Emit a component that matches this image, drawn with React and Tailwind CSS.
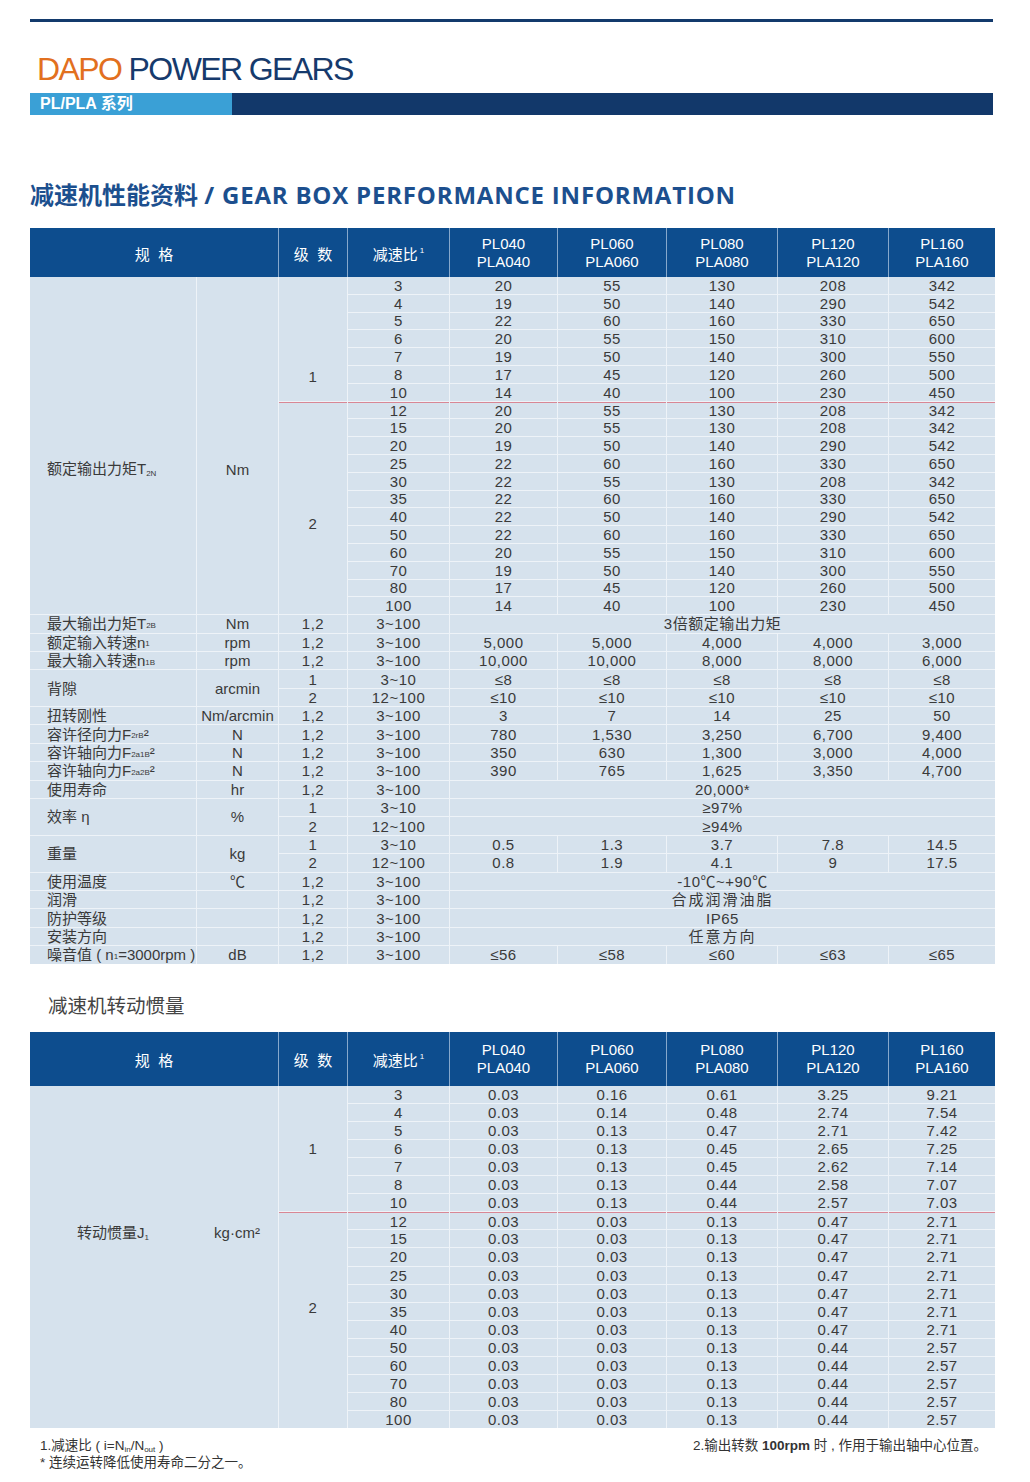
import React from "react";

const COLS = "grid-cols-[166px_81px_68px_101px_107px_108px_110px_110px_106px]";
const RED = "border-t border-[#d98795]";

const rows1 = [
  ["3", "20", "55", "130", "208", "342"],
  ["4", "19", "50", "140", "290", "542"],
  ["5", "22", "60", "160", "330", "650"],
  ["6", "20", "55", "150", "310", "600"],
  ["7", "19", "50", "140", "300", "550"],
  ["8", "17", "45", "120", "260", "500"],
  ["10", "14", "40", "100", "230", "450"],
  ["12", "20", "55", "130", "208", "342"],
  ["15", "20", "55", "130", "208", "342"],
  ["20", "19", "50", "140", "290", "542"],
  ["25", "22", "60", "160", "330", "650"],
  ["30", "22", "55", "130", "208", "342"],
  ["35", "22", "60", "160", "330", "650"],
  ["40", "22", "50", "140", "290", "542"],
  ["50", "22", "60", "160", "330", "650"],
  ["60", "20", "55", "150", "310", "600"],
  ["70", "19", "50", "140", "300", "550"],
  ["80", "17", "45", "120", "260", "500"],
  ["100", "14", "40", "100", "230", "450"],
];

const rows2 = [
  ["3", "0.03", "0.16", "0.61", "3.25", "9.21"],
  ["4", "0.03", "0.14", "0.48", "2.74", "7.54"],
  ["5", "0.03", "0.13", "0.47", "2.71", "7.42"],
  ["6", "0.03", "0.13", "0.45", "2.65", "7.25"],
  ["7", "0.03", "0.13", "0.45", "2.62", "7.14"],
  ["8", "0.03", "0.13", "0.44", "2.58", "7.07"],
  ["10", "0.03", "0.13", "0.44", "2.57", "7.03"],
  ["12", "0.03", "0.03", "0.13", "0.47", "2.71"],
  ["15", "0.03", "0.03", "0.13", "0.47", "2.71"],
  ["20", "0.03", "0.03", "0.13", "0.47", "2.71"],
  ["25", "0.03", "0.03", "0.13", "0.47", "2.71"],
  ["30", "0.03", "0.03", "0.13", "0.47", "2.71"],
  ["35", "0.03", "0.03", "0.13", "0.47", "2.71"],
  ["40", "0.03", "0.03", "0.13", "0.47", "2.71"],
  ["50", "0.03", "0.03", "0.13", "0.44", "2.57"],
  ["60", "0.03", "0.03", "0.13", "0.44", "2.57"],
  ["70", "0.03", "0.03", "0.13", "0.44", "2.57"],
  ["80", "0.03", "0.03", "0.13", "0.44", "2.57"],
  ["100", "0.03", "0.03", "0.13", "0.44", "2.57"],
];

const Sub = ({ children }) => <span className="text-[8px] leading-none relative top-[2px]">{children}</span>;

const specs = [
  { label: <>最大输出力矩T<Sub>2B</Sub></>, unit: "Nm", rows: [{ s: "1,2", r: "3~100", span: "3倍额定输出力矩" }] },
  { label: <>额定输入转速n<Sub>1</Sub></>, unit: "rpm", rows: [{ s: "1,2", r: "3~100", v: ["5,000", "5,000", "4,000", "4,000", "3,000"] }] },
  { label: <>最大输入转速n<Sub>1B</Sub></>, unit: "rpm", rows: [{ s: "1,2", r: "3~100", v: ["10,000", "10,000", "8,000", "8,000", "6,000"] }] },
  {
    label: "背隙", unit: "arcmin", rows: [
      { s: "1", r: "3~10", v: ["≤8", "≤8", "≤8", "≤8", "≤8"] },
      { s: "2", r: "12~100", v: ["≤10", "≤10", "≤10", "≤10", "≤10"] },
    ],
  },
  { label: "扭转刚性", unit: "Nm/arcmin", rows: [{ s: "1,2", r: "3~100", v: ["3", "7", "14", "25", "50"] }] },
  { label: <>容许径向力F<Sub>2rB</Sub>²</>, unit: "N", rows: [{ s: "1,2", r: "3~100", v: ["780", "1,530", "3,250", "6,700", "9,400"] }] },
  { label: <>容许轴向力F<Sub>2a1B</Sub>²</>, unit: "N", rows: [{ s: "1,2", r: "3~100", v: ["350", "630", "1,300", "3,000", "4,000"] }] },
  { label: <>容许轴向力F<Sub>2a2B</Sub>²</>, unit: "N", rows: [{ s: "1,2", r: "3~100", v: ["390", "765", "1,625", "3,350", "4,700"] }] },
  { label: "使用寿命", unit: "hr", rows: [{ s: "1,2", r: "3~100", span: "20,000*" }] },
  {
    label: "效率 η", unit: "%", rows: [
      { s: "1", r: "3~10", span: "≥97%" },
      { s: "2", r: "12~100", span: "≥94%" },
    ],
  },
  {
    label: "重量", unit: "kg", rows: [
      { s: "1", r: "3~10", v: ["0.5", "1.3", "3.7", "7.8", "14.5"] },
      { s: "2", r: "12~100", v: ["0.8", "1.9", "4.1", "9", "17.5"] },
    ],
  },
  { label: "使用温度", unit: "℃", rows: [{ s: "1,2", r: "3~100", span: "-10℃~+90℃" }] },
  { label: "润滑", unit: "", rows: [{ s: "1,2", r: "3~100", span: "合成润滑油脂", wide: true }] },
  { label: "防护等级", unit: "", rows: [{ s: "1,2", r: "3~100", span: "IP65" }] },
  { label: "安装方向", unit: "", rows: [{ s: "1,2", r: "3~100", span: "任意方向", wide: true }] },
  { label: <>噪音值 ( n<Sub>1</Sub>=3000rpm )</>, unit: "dB", rows: [{ s: "1,2", r: "3~100", v: ["≤56", "≤58", "≤60", "≤63", "≤65"] }] },
];

function C({ className = "", children }) {
  return (
    <div className={"bg-[#d6e2ed] flex items-center justify-center leading-none text-[15px] tracking-[0.5px] text-[#3a3a3a] whitespace-nowrap " + className}>
      {children}
    </div>
  );
}

function Header({ models, h }) {
  return (
    <div className={`grid ${COLS} gap-x-px bg-[#86a8cc] text-white ${h}`}>
      <div className="col-span-2 bg-[#0d4d8e] flex items-center justify-center pt-[6px] text-[15px]">规&nbsp;&nbsp;格</div>
      <div className="bg-[#0d4d8e] flex items-center justify-center pt-[6px] text-[15px]">级&nbsp;&nbsp;数</div>
      <div className="bg-[#0d4d8e] flex items-center justify-center pt-[6px] text-[15px]">
        减速比<span className="text-[8px] relative -top-[5px] ml-[2px]">1</span>
      </div>
      {models.map((m) => (
        <div key={m[0]} className="bg-[#0d4d8e] flex flex-col items-center justify-center text-[15px] leading-[18px]">
          <span>{m[0]}</span>
          <span>{m[1]}</span>
        </div>
      ))}
    </div>
  );
}

const models = [["PL040", "PLA040"], ["PL060", "PLA060"], ["PL080", "PLA080"], ["PL120", "PLA120"], ["PL160", "PLA160"]];

function ValueRow({ row, red }) {
  return row.map((v, i) => (
    <C key={i} className={red ? RED : ""}>{v}</C>
  ));
}

function SpecGroup({ g }) {
  const two = g.rows.length === 2;
  const out = [];
  g.rows.forEach((r, idx) => {
    if (idx === 0) {
      out.push(
        <C key="l" className={"justify-start pl-[17px] text-[14px] tracking-normal " + (two ? "row-span-2" : "")}>{g.label}</C>,
        <C key="u" className={"text-[14px] tracking-normal " + (two ? "row-span-2" : "")}>{g.unit}</C>
      );
    }
    out.push(<C key={"s" + idx}>{r.s}</C>, <C key={"r" + idx}>{r.r}</C>);
    if (r.span) {
      out.push(
        <C key={"sp" + idx} className={"col-span-5 text-[14px] " + (r.wide ? "tracking-[2px]" : "")}>
          {r.span}
        </C>
      );
    } else {
      r.v.forEach((v, i) => out.push(<C key={"v" + idx + i}>{v}</C>));
    }
  });
  return out;
}

export default function App() {
  return (
    <div className="w-[1030px] min-h-[1482px] bg-white pl-[30px] pt-[19px] font-['Liberation_Sans','Noto_Sans_CJK_SC',sans-serif]">
      {/* Top rule */}
      <div className="h-[3px] w-[963px] bg-[#133a6c]" />

      {/* Brand */}
      <div className="mt-[31px] pl-[7px] h-[32px] leading-[32px] text-[32px] tracking-[-1.6px]">
        <span className="text-[#e2701f]">DAPO</span> <span className="text-[#163a6c]">POWER GEARS</span>
      </div>

      <div className="mt-[8px] flex h-[22px] w-[963px]">
        <div className="w-[202px] bg-[#3aa0d6] text-white text-[16px] font-bold leading-[22px] pl-[10px]">
          PL/PLA 系列
        </div>
        <div className="flex-1 bg-[#12386a]" />
      </div>

      {/* Title */}
      <h1 className="mt-[64px] h-[32px] leading-[32px] text-[24px] font-bold text-[#1c4f8e] font-['Open_Sans','Noto_Sans_CJK_SC',sans-serif]">
        减速机性能资料 <span className="tracking-[0.8px]">/ GEAR BOX PERFORMANCE INFORMATION</span>
      </h1>

      {/* Table 1 */}
      <div className="mt-[17px] w-[965px]">
        <Header models={models} h="h-[49px]" />
        <div className={`grid ${COLS} grid-rows-[repeat(19,16.8px)_repeat(19,17.4px)] gap-px bg-[#eef3f8]`}>
          {rows1.map((row, i) => (
            <React.Fragment key={i}>
              {i === 0 && (
                <>
                  <C className="row-span-19 items-start justify-start pl-[17px] pt-[184px] text-[14px] tracking-normal">
                    <span>额定输出力矩T<Sub>2N</Sub></span>
                  </C>
                  <C className="row-span-19 items-start pt-[185px] text-[14px] tracking-normal">Nm</C>
                  <C className="row-span-7 items-start pt-[92px]">1</C>
                </>
              )}
              {i === 7 && <C className={"row-span-12 items-start pt-[113px] " + RED}>2</C>}
              <ValueRow row={row} red={i === 7} />
            </React.Fragment>
          ))}
          {specs.map((g, i) => (
            <SpecGroup key={i} g={g} />
          ))}
        </div>
      </div>

      {/* Inertia title */}
      <div className="mt-[30px] ml-[18px] h-[24px] leading-[24px] text-[19.5px] text-[#444]">减速机转动惯量</div>

      {/* Table 2 */}
      <div className="mt-[14px] w-[965px]">
        <Header models={models} h="h-[54px]" />
        <div className={`grid ${COLS} grid-rows-[repeat(19,17.1px)] gap-px bg-[#eef3f8]`}>
          {rows2.map((row, i) => (
            <React.Fragment key={i}>
              {i === 0 && (
                <>
                  <C className="col-span-2 row-span-19 items-start pt-[139px] text-[14px] tracking-normal">
                    <div className="w-[166px] text-center">转动惯量J<Sub>1</Sub></div>
                    <div className="w-[82px] text-center text-[15px]">kg·cm²</div>
                  </C>
                  <C className="row-span-7 items-start pt-[55px]">1</C>
                </>
              )}
              {i === 7 && <C className={"row-span-12 items-start pt-[87px] " + RED}>2</C>}
              <ValueRow row={row} red={i === 7} />
            </React.Fragment>
          ))}
        </div>
      </div>

      {/* Footnotes */}
      <div className="mt-[9px] w-[965px] flex justify-between pl-[10px] pr-[8px] text-[13.5px] leading-[17px] text-[#333]">
        <div>
          <div>
            1.减速比 ( i=N<Sub>in</Sub>/N<Sub>out</Sub> )
          </div>
          <div>* 连续运转降低使用寿命二分之一。</div>
        </div>
        <div>
          2.输出转数 <span className="font-bold">100rpm</span> 时 , 作用于输出轴中心位置。
        </div>
      </div>
    </div>
  );
}
